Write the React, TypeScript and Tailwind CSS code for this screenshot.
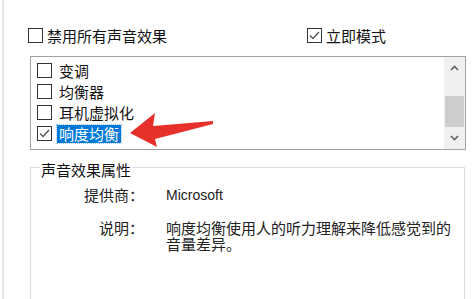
import React from "react";

const cjk = { fontFamily: '"Noto Sans CJK SC", "Noto Sans", sans-serif' };

function Box({ checked }: { checked?: boolean }) {
  return (
    <span className="flex h-[15px] w-[15px] shrink-0 items-center justify-center border border-[#333333] bg-white">
      {checked && (
        <svg width="11" height="9" viewBox="0 0 11 9">
          <path d="M1 4.5 L4 7.5 L10 1" fill="none" stroke="#555555" strokeWidth="1.4" />
        </svg>
      )}
    </span>
  );
}

const effects = [
  { label: "变调", checked: false },
  { label: "均衡器", checked: false },
  { label: "耳机虚拟化", checked: false },
  { label: "响度均衡", checked: true, selected: true },
];

export default function App() {
  return (
    <div className="relative flex h-[299px] w-[475px] overflow-hidden bg-white text-[15px] text-[#111]" style={cjk}>
      <div className="w-[2px] shrink-0" />
      <div className="flex-1 border-l-2 border-[#e6e6e6] pl-[24px] pt-[28px]">
        {/* top options */}
        <div className="flex h-[15px] items-center">
          <div className="flex w-[279px] items-center gap-[4px]">
            <Box />
            <span className="leading-[15px]">禁用所有声音效果</span>
          </div>
          <div className="flex items-center gap-[4px]">
            <Box checked />
            <span className="leading-[15px]">立即模式</span>
          </div>
        </div>

        {/* effects list */}
        <div className="ml-[2px] mt-[13px] flex h-[94px] w-[436px] border border-[#a0a0a0] bg-white">
          <div className="flex-1 pl-[6px] pt-[3px]">
            {effects.map((e) => (
              <div key={e.label} className="flex h-[21px] items-center">
                <Box checked={e.checked} />
                <span
                  className={
                    e.selected
                      ? "ml-[5px] bg-[#0078d7] px-[2px] leading-[18px] text-white outline-1 outline-dotted outline-[#9cc3ea]"
                      : "ml-[5px] px-[2px] leading-[18px]"
                  }
                >
                  {e.label}
                </span>
              </div>
            ))}
          </div>
          <div className="flex w-[21px] flex-col bg-[#f0f0f0]">
            <div className="flex h-[22px] items-center justify-center">
              <svg width="9" height="6" viewBox="0 0 9 6">
                <path d="M1 5 L4.5 1.5 L8 5" fill="none" stroke="#606060" strokeWidth="1.6" />
              </svg>
            </div>
            <div className="h-[17px]" />
            <div className="mx-[1px] h-[31px] bg-[#cdcdcd]" />
            <div className="flex flex-1 items-center justify-center">
              <svg width="9" height="6" viewBox="0 0 9 6">
                <path d="M1 1 L4.5 4.5 L8 1" fill="none" stroke="#606060" strokeWidth="1.6" />
              </svg>
            </div>
          </div>
        </div>

        {/* properties group */}
        <div className="relative ml-[2px] mt-[17px] h-[140px] w-[435px] border border-[#dcdcdc] pt-[17px]">
          <span className="absolute left-[9px] top-[-7px] bg-white px-[1px] leading-[18px]">声音效果属性</span>
          <div className="flex items-center">
            <span className="w-[113px] text-right leading-[20px] text-[#222]">提供商：</span>
            <span
              className="ml-[22px] text-[14px] leading-[20px] text-[#222]"
              style={{ fontFamily: '"Liberation Sans", Arial, sans-serif' }}
            >
              Microsoft
            </span>
          </div>
          <div className="mt-[15px] flex items-start">
            <span className="w-[113px] text-right leading-[16px] text-[#222]">说明：</span>
            <p className="ml-[22px] w-[292px] leading-[16px] text-[#222]">
              响度均衡使用人的听力理解来降低感觉到的音量差异。
            </p>
          </div>
        </div>
      </div>

      {/* red annotation arrow */}
      <svg className="pointer-events-none absolute left-0 top-0" width="475" height="299" viewBox="0 0 475 299">
        <polygon
          points="130,133 155,113 153,126 213,121 213,124 155,139 157,147"
          fill="#e8302a"
        />
      </svg>
    </div>
  );
}
